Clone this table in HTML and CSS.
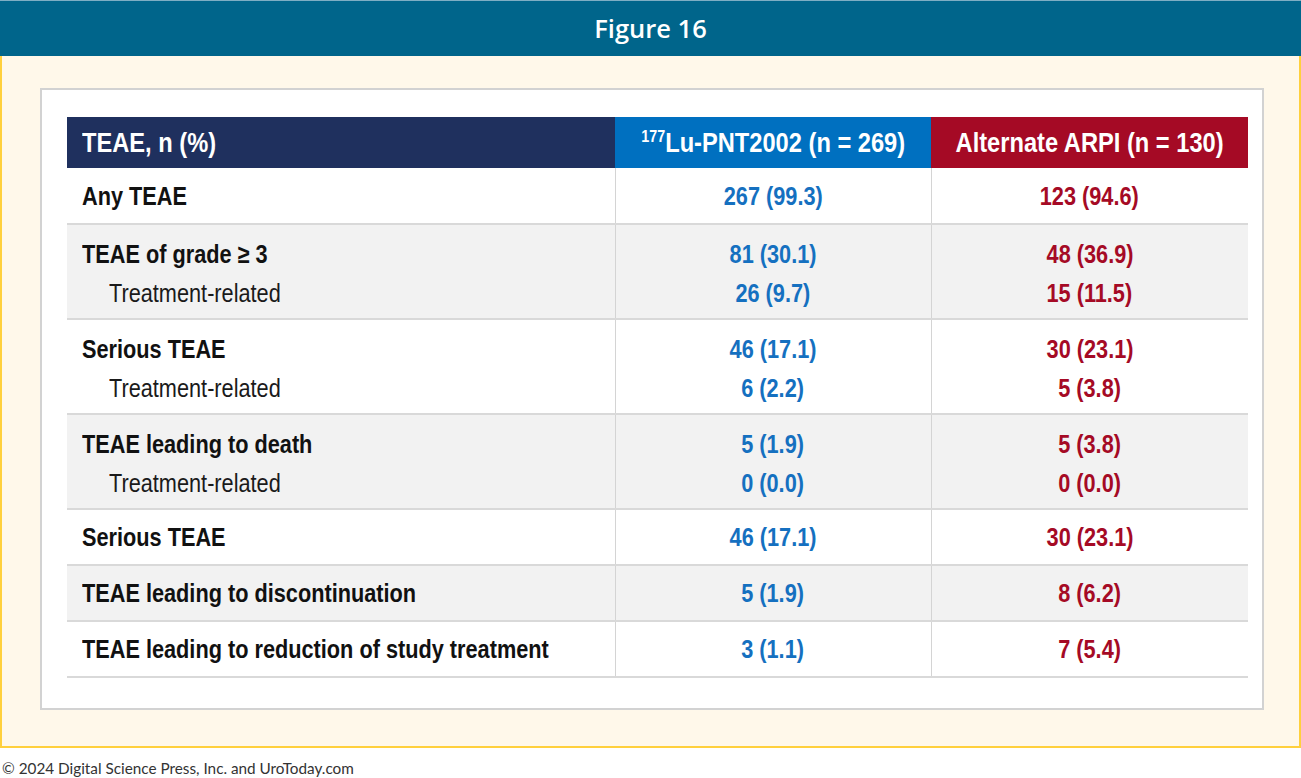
FILE: index.html
```html
<!DOCTYPE html>
<html lang="en">
<head>
<meta charset="utf-8">
<title>Figure 16</title>
<link rel="stylesheet" href="styles.css">
</head>
<body>
<div class="page">
  <header class="fig-header">Figure 16</header>
  <section class="panel">
    <div class="frame">
      <table class="teae">
        <colgroup>
          <col class="c-label">
          <col class="c-lu">
          <col class="c-arpi">
        </colgroup>
        <thead>
          <tr>
            <th class="h-label"><span class="nx">TEAE, n (%)</span></th>
            <th class="h-lu"><span class="nx"><sup>177</sup>Lu-PNT2002 (n = 269)</span></th>
            <th class="h-arpi"><span class="nx">Alternate ARPI (n = 130)</span></th>
          </tr>
        </thead>
        <tbody>
          <tr class="single first">
            <td class="label"><span class="nx">Any TEAE</span></td>
            <td class="lu"><span class="nx">267 (99.3)</span></td>
            <td class="arpi"><span class="nx">123 (94.6)</span></td>
          </tr>
          <tr class="double shade">
            <td class="label"><div><span class="nx">TEAE of grade ≥ 3</span></div><div class="sub"><span class="nx">Treatment-related</span></div></td>
            <td class="lu"><div><span class="nx">81 (30.1)</span></div><div><span class="nx">26 (9.7)</span></div></td>
            <td class="arpi"><div><span class="nx">48 (36.9)</span></div><div><span class="nx">15 (11.5)</span></div></td>
          </tr>
          <tr class="double">
            <td class="label"><div><span class="nx">Serious TEAE</span></div><div class="sub"><span class="nx">Treatment-related</span></div></td>
            <td class="lu"><div><span class="nx">46 (17.1)</span></div><div><span class="nx">6 (2.2)</span></div></td>
            <td class="arpi"><div><span class="nx">30 (23.1)</span></div><div><span class="nx">5 (3.8)</span></div></td>
          </tr>
          <tr class="double shade">
            <td class="label"><div><span class="nx">TEAE leading to death</span></div><div class="sub"><span class="nx">Treatment-related</span></div></td>
            <td class="lu"><div><span class="nx">5 (1.9)</span></div><div><span class="nx">0 (0.0)</span></div></td>
            <td class="arpi"><div><span class="nx">5 (3.8)</span></div><div><span class="nx">0 (0.0)</span></div></td>
          </tr>
          <tr class="single">
            <td class="label"><span class="nx">Serious TEAE</span></td>
            <td class="lu"><span class="nx">46 (17.1)</span></td>
            <td class="arpi"><span class="nx">30 (23.1)</span></td>
          </tr>
          <tr class="single shade">
            <td class="label"><span class="nx">TEAE leading to discontinuation</span></td>
            <td class="lu"><span class="nx">5 (1.9)</span></td>
            <td class="arpi"><span class="nx">8 (6.2)</span></td>
          </tr>
          <tr class="single">
            <td class="label"><span class="nx">TEAE leading to reduction of study treatment</span></td>
            <td class="lu"><span class="nx">3 (1.1)</span></td>
            <td class="arpi"><span class="nx">7 (5.4)</span></td>
          </tr>
        </tbody>
      </table>
    </div>
  </section>
  <footer class="copyright">© 2024 Digital Science Press, Inc. and UroToday.com</footer>
</div>
</body>
</html>
```

FILE: styles.css
```css
html, body {
  margin: 0;
  padding: 0;
  background: #ffffff;
}

.page {
  width: 1301px;
}

.fig-header {
  box-sizing: border-box;
  height: 56px;
  background: #00658b;
  border-top: 1px solid #7eaec4;
  color: #ffffff;
  font-family: "Open Sans", "Noto Sans", sans-serif;
  font-weight: 600;
  font-size: 25.5px;
  display: flex;
  align-items: center;
  justify-content: center;
  padding-bottom: 2px;
}

.panel {
  box-sizing: border-box;
  height: 692px;
  background: #fff8ea;
  border: 2px solid #ffd03d;
  border-top: none;
  padding: 32px 0 0 38px;
}

.frame {
  box-sizing: border-box;
  width: 1224px;
  height: 622px;
  background: #ffffff;
  border: 2px solid #d2d2d2;
  padding: 27px 0 0 25px;
}

.teae {
  width: 1181px;
  border-collapse: collapse;
  table-layout: fixed;
  font-family: "Liberation Sans", Arial, sans-serif;
  font-weight: 700;
  font-size: 26px;
  color: #111111;
}

/* condensed look of the original (Arial Narrow style) */
.nx {
  display: inline-block;
  white-space: nowrap;
  transform: scaleX(0.835);
  transform-origin: center center;
}

.label .nx,
.h-label .nx {
  transform-origin: left center;
}

.c-label { width: 548px; }
.c-lu { width: 316px; }
.c-arpi { width: 317px; }

.teae th {
  height: 51px;
  padding: 0;
  color: #ffffff;
  font-weight: 700;
  font-size: 28px;
  line-height: 32px;
  vertical-align: middle;
}

.teae th .nx {
  transform: scaleX(0.845);
}

.h-label {
  background: #1f305e;
  text-align: left;
  padding-left: 15px !important;
}

.h-lu {
  background: #0070c0;
  text-align: center;
}

.h-lu sup {
  font-size: 17px;
  line-height: 0;
  vertical-align: 10px;
}

.h-arpi {
  background: #a50a25;
  text-align: center;
}

.teae td {
  padding: 0;
  border-bottom: 2px solid #d9d9d9;
  vertical-align: top;
}

.teae td + td {
  border-left: 1px solid #d4d4d4;
}

.shade td {
  background: #f2f2f2;
}

.single td {
  height: 54px;
  line-height: 50px;
  vertical-align: middle;
}

.single.first td {
  height: 55px;
}

.double td {
  height: 95px;
  line-height: 39px;
  padding-top: 10px;
  box-sizing: border-box;
}

.label {
  padding-left: 15px !important;
  text-align: left;
}

.label .sub {
  font-weight: 400;
  padding-left: 27px;
  color: #1a1a1a;
}

.lu {
  text-align: center;
  color: #1570c0;
}

.arpi {
  text-align: center;
  color: #a50a25;
}

.copyright {
  font-family: Lato, "Open Sans", sans-serif;
  font-size: 15.3px;
  color: #333333;
  padding: 10px 0 0 2px;
  line-height: 20px;
}
```
